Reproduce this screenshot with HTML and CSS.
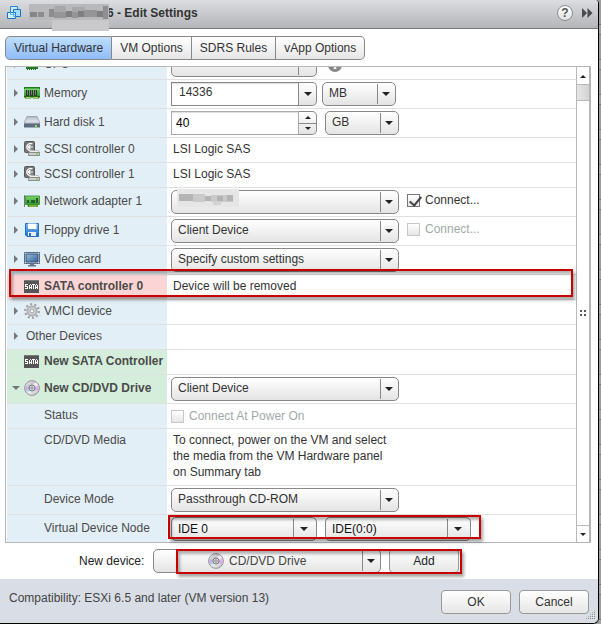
FILE: index.html
```
<!DOCTYPE html>
<html lang="en">
<head>
<meta charset="utf-8">
<title>Edit Settings</title>
<link rel="stylesheet" href="styles.css">
</head>
<body>
<svg width="0" height="0" class="defs" aria-hidden="true">
  <defs>
    <linearGradient id="g-green" x1="0" y1="0" x2="0" y2="1"><stop offset="0" stop-color="#7fd66e"/><stop offset="1" stop-color="#1f8a1c"/></linearGradient>
    <linearGradient id="g-blue" x1="0" y1="0" x2="0" y2="1"><stop offset="0" stop-color="#7db9f5"/><stop offset="1" stop-color="#1c6fd0"/></linearGradient>
    <linearGradient id="g-disc" x1="0" y1="0" x2="1" y2="1"><stop offset="0" stop-color="#fafafa"/><stop offset=".35" stop-color="#c4c4ca"/><stop offset=".5" stop-color="#f2f2f6"/><stop offset="1" stop-color="#b4b4ba"/></linearGradient>
    <linearGradient id="g-disk" x1="0" y1="0" x2="0" y2="1"><stop offset="0" stop-color="#b4bcc8"/><stop offset="1" stop-color="#e8ecf1"/></linearGradient>
    <linearGradient id="g-screen" x1="0" y1="0" x2="1" y2="1"><stop offset="0" stop-color="#9dbfe0"/><stop offset="1" stop-color="#33618f"/></linearGradient>
    <symbol id="i-memory" viewBox="0 0 16 16">
      <path d="M0 2h16v10h-1v1.500h-6v-1h-2v1H1V12H0z" fill="url(#g-green)"/>
      <path d="M0 2h16v2H0z" fill="#1f7a1f"/><path d="M1 3.500h14v1H1z" fill="#8be07c"/>
      <path d="M2 5h3v6H2zM6 5h3v6H6zM10 5h3v6h-3z" fill="#2b352b"/>
      <path d="M3 5h1v5H3zM7 5h1v5H7zM11 5h1v5h-1z" fill="#77807a"/>
      <path d="M0 11h16v1.500H0z" fill="#176b17"/><path d="M2 12.500h5M9 12.500h5" stroke="#c9c94e"/>
    </symbol>
    <symbol id="i-cpu" viewBox="0 0 16 16">
      <path d="M2 2h12v11H2z" fill="#1c7a1c"/><path d="M4 3h8v8H4z" fill="#333"/><path d="M3 13.500h10" stroke="#175c17" stroke-dasharray="1 1"/>
    </symbol>
    <symbol id="i-disk" viewBox="0 0 16 16">
      <path d="M3 2.500h10l3 6.500H0z" fill="url(#g-disk)" stroke="#8a93a0" stroke-width=".7"/>
      <path d="M0 9h16v4.500H0z" fill="#5d6b80"/><path d="M0 9.500h16" stroke="#8c98aa"/><path d="M11 11h2v2h-2z" fill="#85e34a"/>
    </symbol>
    <symbol id="i-scsi" viewBox="0 0 16 16">
      <rect x=".5" y=".5" width="10" height="11" rx="1" fill="#767676" stroke="#5a5a5a"/>
      <path d="M8.500 3A3.600 3.600 0 1 0 8.500 9" fill="none" stroke="#fff" stroke-width="1.200"/>
      <path d="M9 6H4M6.500 3.800L4.200 6l2.300 2.200" fill="none" stroke="#fff" stroke-width="1.200"/>
      <path d="M6 9.500h8.500l1.200 2.500H4.800z" fill="#eee" stroke="#999" stroke-width=".5"/><path d="M4.500 11.500h11v3h-11z" fill="#cfcfcd" stroke="#777" stroke-width=".8"/><path d="M12 12.500h2v1h-2z" fill="#4ed60c"/>
    </symbol>
    <symbol id="i-net" viewBox="0 0 16 16">
      <path d="M.5 2v12" stroke="#777"/><path d="M1.500 3h14v8.500h-2v2H4v-2H1.500z" fill="url(#g-green)" stroke="#2c8a26" stroke-width=".8"/>
      <path d="M3 7h2v3H3zM7 7h4v3H7zM12 5h2v5h-2z" fill="#275c2c"/><path d="M5 13h8" stroke="#d4c94b"/>
    </symbol>
    <symbol id="i-floppy" viewBox="0 0 16 16">
      <path d="M1.500 1.500h13v13H3l-1.500-1.500z" fill="url(#g-blue)" stroke="#246fc4"/>
      <path d="M4 1.500h8.500V7H4z" fill="#fff"/><path d="M4 10h8v4H4z" fill="#e8eef5"/><path d="M5 11h2v3H5z" fill="#246fc4"/>
    </symbol>
    <symbol id="i-video" viewBox="0 0 16 16">
      <path d="M.5 1.500h15v11H.5z" fill="#dfe6ee" stroke="#5c6f86"/><path d="M2 3h12v8H2z" fill="url(#g-screen)" stroke="#2f5279"/>
      <path d="M6 13h4v1h2v1.500H4V14h2z" fill="#66788c"/>
    </symbol>
    <symbol id="i-sata" viewBox="0 0 16 16">
      <g shape-rendering="crispEdges"><path d="M0 2h15v13H0z" fill="#555"/><path d="M0 2h15v1H0z" fill="#7a7a7a"/>
      <path d="M1 6h3v1H1zM1 7h1v1H1zM1 8h3v1H1zM3 9h1v1H3zM1 10h3v1H1zM6 6h1v1H6zM5 7h1v4H5zM7 7h1v4H7zM6 9h1v1H6zM8 6h3v1H8zM9 7h1v4H9zM12 6h1v1h-1zM11 7h1v4h-1zM13 7h1v4h-1zM12 9h1v1h-1z" fill="#fff"/></g>
    </symbol>
    <symbol id="i-gear" viewBox="0 0 16 16">
      <circle cx="8" cy="8" r="6.700" fill="none" stroke="#a3a6a8" stroke-width="2.500" stroke-dasharray="2.100 2.100"/>
      <circle cx="8" cy="8" r="4.500" fill="#dadcdd" stroke="#b0b2b4" stroke-width="2"/><circle cx="8" cy="8" r="2" fill="#f4f7f9" stroke="#999"/>
    </symbol>
    <symbol id="i-disc" viewBox="0 0 16 16">
      <circle cx="8" cy="8" r="7.400" fill="url(#g-disc)" stroke="#98989c"/>
      <path d="M1.500 6L5 7v3l-3.500 1z" fill="#c9a5ef" opacity=".8"/><path d="M14.500 5L11 7v3l3.500 1z" fill="#d79af0" opacity=".7"/><path d="M2 10l3-1 1 2-2 2z" fill="#9fe0ea" opacity=".7"/>
      <circle cx="8" cy="8" r="3" fill="#e3e3e6" stroke="#77777c"/><circle cx="8" cy="8" r="1.200" fill="#fff" stroke="#66666b" stroke-width=".8"/>
    </symbol>
  </defs>
</svg>
<main class="dialog">
  <header class="titlebar">
    <svg class="vm" viewBox="0 0 14 14" aria-hidden="true"><path d="M3.500.500h7v8h-7z" fill="#c8ecff" stroke="#2a86d8"/><path d="M6.500 3.500h7v7h-7z" fill="#a6dcfb" stroke="#1673c9"/><path d="M.5 6.500h8v6h-8z" fill="#d5f3ff" stroke="#1673c9"/><path d="M3.500 6.500v2h5M6.500 6.500v4h2" fill="none" stroke="#5db2ea"/></svg>
    <svg class="mask" viewBox="0 0 80 27" aria-hidden="true">
      <path d="M0 0h80v16H0z" fill="#b9b9bb"/><path d="M23 16h57v11H23z" fill="#c9c9cb"/>
      <path d="M1 8h7v5H1z" fill="#858587"/><path d="M9 8h6v5H9zM20 5h5v8h-5z" fill="#8c8c8d"/><path d="M25 2h12v6H25zM43 3h13v5H43z" fill="#a8a8aa"/>
      <path d="M25 8h12v6H25z" fill="#959597"/><path d="M37 7h6v6h-6zM49 7h6v6h-6zM68 7h6v6h-6z" fill="#7f7f81"/><path d="M43 8h6v6h-6zM55 6h13v7H55z" fill="#959597"/><path d="M74 2h5v13h-5z" fill="#8f8f91"/>
    </svg>
    <h1>6 - Edit Settings</h1>
    <button class="help" type="button" aria-label="Help">?</button>
    <button class="more" type="button" aria-label="Expand"><svg viewBox="0 0 12 10"><path d="M1 0l5 5-5 5zM6.500 0l5 5-5 5z" fill="#4a4a4c"/></svg></button>
  </header>

  <nav class="tabs">
    <button class="tab active" type="button">Virtual Hardware</button>
    <button class="tab" type="button">VM Options</button>
    <button class="tab" type="button">SDRS Rules</button>
    <button class="tab" type="button">vApp Options</button>
  </nav>

  <section class="panel">
    <div class="rows">
      <div class="row clipped">
        <div class="name"><i class="tri"></i><svg class="icon"><use href="#i-cpu"/></svg><label for="cpu">CPU</label></div>
        <div class="value"><span class="pick w-mem"><select id="cpu" aria-label="CPU count"><option></option></select></span><span class="info">i</span></div>
      </div>
      <div class="row">
        <div class="name"><i class="tri"></i><svg class="icon"><use href="#i-memory"/></svg><label for="mem">Memory</label></div>
        <div class="value"><span class="combo"><input id="mem" type="text" value="14336"><button type="button" class="drop" aria-label="Memory sizes"><i class="down"></i></button></span>
          <span class="pick w-unit"><select aria-label="Memory unit"><option>MB</option></select></span></div>
      </div>
      <div class="row">
        <div class="name"><i class="tri"></i><svg class="icon"><use href="#i-disk"/></svg><label for="hd">Hard disk 1</label></div>
        <div class="value wide"><span class="combo spin"><input id="hd" type="text" value="40"><span class="steps"><button type="button" aria-label="Increase"><i class="up"></i></button><button type="button" aria-label="Decrease"><i class="down"></i></button></span></span>
          <span class="pick w-unit"><select aria-label="Disk unit"><option>GB</option></select></span></div>
      </div>
      <div class="row short">
        <div class="name"><i class="tri"></i><svg class="icon"><use href="#i-scsi"/></svg><span>SCSI controller 0</span></div>
        <div class="value"><p>LSI Logic SAS</p></div>
      </div>
      <div class="row short">
        <div class="name"><i class="tri"></i><svg class="icon"><use href="#i-scsi"/></svg><span>SCSI controller 1</span></div>
        <div class="value"><p>LSI Logic SAS</p></div>
      </div>
      <div class="row">
        <div class="name"><i class="tri"></i><svg class="icon"><use href="#i-net"/></svg><label for="net">Network adapter 1</label></div>
        <div class="value"><span class="pick w-full"><select id="net"><option></option></select>
          <svg class="netmask" viewBox="0 0 62 18" aria-hidden="true"><path d="M0 0h62v18H0z" fill="#e6e6e6"/><path d="M2 5h14v7H2z" fill="#b4b4b4"/><path d="M16 5h12v8H16zM34 6h22v7H34z" fill="#cacaca"/><path d="M28 7h6v5h-6zM40 7h6v5h-6zM50 6h6v6h-6z" fill="#b4b4b4"/><path d="M36 12h8v4h-8z" fill="#d2d2d2"/></svg></span>
          <label class="check"><input type="checkbox" checked>Connect...</label></div>
      </div>
      <div class="row">
        <div class="name"><i class="tri"></i><svg class="icon"><use href="#i-floppy"/></svg><label for="floppy">Floppy drive 1</label></div>
        <div class="value"><span class="pick w-full"><select id="floppy"><option>Client Device</option></select></span>
          <label class="check off"><input type="checkbox" disabled>Connect...</label></div>
      </div>
      <div class="row">
        <div class="name"><i class="tri"></i><svg class="icon"><use href="#i-video"/></svg><label for="video">Video card</label></div>
        <div class="value"><span class="pick w-full"><select id="video"><option>Specify custom settings</option></select></span></div>
      </div>
      <div class="row short removed">
        <div class="name"><i class="tri none"></i><svg class="icon"><use href="#i-sata"/></svg><span>SATA controller 0</span></div>
        <div class="value"><p>Device will be removed</p></div>
        <div class="mark mark-row"></div>
      </div>
      <div class="row short">
        <div class="name"><i class="tri"></i><svg class="icon"><use href="#i-gear"/></svg><span>VMCI device</span></div>
        <div class="value"></div>
      </div>
      <div class="row short">
        <div class="name"><i class="tri"></i><span class="group">Other Devices</span></div>
        <div class="value"></div>
      </div>
      <div class="row short added">
        <div class="name"><i class="tri none"></i><svg class="icon"><use href="#i-sata"/></svg><span>New SATA Controller</span></div>
        <div class="value"></div>
      </div>
      <div class="row added">
        <div class="name"><i class="tri open"></i><svg class="icon"><use href="#i-disc"/></svg><label for="cd">New CD/DVD Drive</label></div>
        <div class="value"><span class="pick w-full"><select id="cd"><option>Client Device</option></select></span></div>
      </div>
      <div class="row short sub">
        <div class="name"><span>Status</span></div>
        <div class="value"><label class="check off first"><input type="checkbox" disabled>Connect At Power On</label></div>
      </div>
      <div class="row tall sub">
        <div class="name"><span>CD/DVD Media</span></div>
        <div class="value"><p class="note">To connect, power on the VM and select the media from the VM Hardware panel on Summary tab</p></div>
      </div>
      <div class="row sub">
        <div class="name"><label for="mode">Device Mode</label></div>
        <div class="value"><span class="pick w-full"><select id="mode"><option>Passthrough CD-ROM</option></select></span></div>
      </div>
      <div class="row last sub">
        <div class="name"><label for="node">Virtual Device Node</label></div>
        <div class="value"><span class="pick w-mem"><select id="node"><option>IDE 0</option></select></span>
          <span class="pick w-mem"><select aria-label="Device slot"><option>IDE(0:0)</option></select></span>
          <div class="mark mark-node"></div></div>
      </div>
    </div>
    <div class="scroll" aria-hidden="true">
      <span class="end"><i class="up"></i></span>
      <span class="thumb"></span>
      <span class="track"><i class="grip"></i></span>
      <span class="end bottom"><i class="down"></i></span>
    </div>
  </section>

  <div class="newdev">
    <label for="newdev">New device:</label>
    <span class="pick w-full device"><svg class="icon"><use href="#i-disc"/></svg><select id="newdev"><option>CD/DVD Drive</option></select></span>
    <button class="btn" type="button">Add</button>
    <div class="mark mark-new"></div>
  </div>

  <footer class="footer">
    <p>Compatibility: ESXi 6.5 and later (VM version 13)</p>
    <button class="btn" type="button">OK</button>
    <button class="btn" type="button">Cancel</button>
    <i class="resize"></i>
  </footer>
</main>
</body>
</html>
```
FILE: styles.css
```
* { box-sizing: border-box; }

body {
  margin: 0;
  padding-right: 2px;
  background: repeating-linear-gradient(#9c9c9c 0 24px, #777 24px 25px, #a4a4a4 25px 34px, #777 34px 35px);
  font: 12px/16px "Liberation Sans", Arial, sans-serif;
  color: #333;
}

.defs { position: absolute; }

button, input, select {
  margin: 0;
  padding: 0;
  font: inherit;
  color: inherit;
}

p, h1 { margin: 0; }

.dialog {
  background: #fff;
  border: solid #000;
  border-width: 0 1px 1px 0;
  border-radius: 0 4px 6px 0;
  overflow: hidden;
}

/* Title bar */
.titlebar {
  display: flex;
  align-items: center;
  height: 29px;
  padding: 0 5px 3px 7px;
  background: linear-gradient(#dcdde1, #b4b5b9);
  border-bottom: 1px solid #77777a;
}

.vm { width: 14px; height: 14px; }

.mask {
  position: absolute;
  left: 29px;
  top: 4px;
  width: 80px;
  height: 27px;
}

.titlebar h1 {
  flex: 1;
  padding-left: 86px;
  font-size: 12px;
}

.help {
  width: 16px;
  height: 16px;
  border: 1px solid #8b8b8e;
  border-radius: 50%;
  background: linear-gradient(#fff, #e2e2e4);
  font-weight: bold;
  line-height: 14px;
  color: #555;
}

.more {
  display: flex;
  width: 20px;
  padding-left: 8px;
  border: 0;
  background: none;
}

.more svg { width: 12px; height: 10px; }

/* Tabs */
.tabs {
  display: flex;
  padding: 7px 5px 6px;
}

.tab {
  height: 24px;
  padding: 0 8px;
  border: 1px solid #88888a;
  border-left-width: 0;
  background: linear-gradient(#fff, #e6e6e6);
}

.tab:first-child { border-left-width: 1px; border-radius: 5px 0 0 5px; }
.tab:last-child { border-radius: 0 5px 5px 0; }
.tab.active { background: linear-gradient(#bedefc, #8fbcfa); }

/* Device list */
.panel {
  display: flex;
  margin: 0 7px 0 5px;
  border: 1px solid #b4b6b7;
  border-right-width: 2px;
}

.rows { flex: 1; padding-left: 1px; }

.row {
  position: relative;
  display: grid;
  grid-template-columns: 160px 1fr;
  height: 29px;
  border-bottom: 1px solid #e0e0e0;
}

.row.short { height: 25px; }
.row.tall { height: 57px; }
.row.last { height: 27px; border-bottom: 0; }

.row.clipped {
  grid-template-rows: 28px;
  align-content: end;
  height: 13px;
  overflow: hidden;
}

.name {
  display: flex;
  align-items: center;
  padding: 0 0 2px 7px;
  background: #e3eff6;
  color: #4a4a4a;
  white-space: nowrap;
}

.name .icon + * { margin-left: 4px; }
.name .group { margin-left: 2px; }
.sub .name { padding-left: 37px; }
.removed .name { background: #fbd5d5; font-weight: bold; }
.added .name { background: #d5eedb; font-weight: bold; }

.tall .name,
.tall .value { align-items: flex-start; padding-top: 3px; }

.icon {
  flex: none;
  width: 16px;
  height: 16px;
}

.tri {
  width: 4px;
  margin-right: 6px;
  border: solid transparent;
  border-width: 4px 0 4px 4px;
  border-left-color: #777;
}

.tri.none { border-color: transparent; }

.tri.open {
  width: 8px;
  margin: 0 4px 0 -2px;
  border-width: 4px 4px 0;
  border-color: #777 transparent transparent;
}

.value {
  position: relative;
  display: flex;
  align-items: center;
  gap: 5px;
  padding-left: 4px;
}

.value p { padding: 0 0 2px 2px; }
.value .note { width: 220px; }
.value.wide { gap: 8px; }
.last .value { gap: 8px; }

/* Drop-downs */
.pick {
  position: relative;
  display: flex;
  align-items: center;
  height: 24px;
  border: 1px solid #888;
  border-radius: 5px;
  background: linear-gradient(#fff, #e4e4e4);
}

.pick select {
  flex: 1;
  width: 100%;
  height: 20px;
  padding: 0 18px 2px 6px;
  border: 0;
  background: none;
  appearance: none;
}

.pick::before {
  content: "";
  position: absolute;
  right: 17px;
  top: 1px;
  bottom: 1px;
  border-left: 1px solid #888;
}

.pick::after,
.down,
.up {
  content: "";
  border: solid transparent;
  border-width: 4px 4px 0;
  border-top-color: #222;
}

.pick::after {
  position: absolute;
  right: 5px;
  top: 9px;
}

.last .pick select { padding-bottom: 0; color: #111; }
.last .pick::before { right: 22px; }
.last .pick::after { right: 8px; }

.up, .down { display: block; }
.up { border-width: 0 3px 3px; border-bottom-color: #222; }
.down { border-width: 3px 3px 0; }
.drop .down { border-width: 4px 4px 0; }

.w-mem { width: 146px; }
.w-unit { width: 74px; }
.w-full { width: 228px; }

.netmask {
  position: absolute;
  left: 5px;
  top: -2px;
  width: 62px;
  height: 18px;
}

.info {
  width: 14px;
  height: 14px;
  margin-left: 6px;
  border-radius: 50%;
  background: #888;
  color: #fff;
  font: bold 12px/14px "Liberation Serif", serif;
  text-align: center;
}

/* Text boxes with a button */
.combo {
  display: flex;
  width: 146px;
  height: 24px;
}

.combo input {
  flex: 1;
  min-width: 0;
  padding: 0 0 5px 7px;
  border: 1px solid #888;
  background: #fff;
  box-shadow: inset 0 1px 1px #ddd;
}

.combo.spin input { padding: 0 0 0 4px; border-color: #aaa; color: #000; }

.drop,
.steps {
  display: flex;
  align-items: center;
  justify-content: center;
  width: 18px;
  border: 1px solid #888;
  border-left: 0;
  border-radius: 0 5px 5px 0;
  background: linear-gradient(#fff, #e4e4e4);
}

.steps {
  flex-direction: column;
  overflow: hidden;
}

.steps button {
  flex: 1;
  display: flex;
  align-items: center;
  justify-content: center;
  width: 100%;
  border: 0;
  background: none;
}

.steps button + button { border-top: 1px solid #888; }

/* Check boxes */
.check {
  display: flex;
  align-items: center;
  gap: 5px;
  height: 16px;
  margin: 0 0 4px 3px;
}

.check.first { margin: 0; }
.check.off { color: #a0aaaa; }

.check input {
  position: relative;
  width: 13px;
  height: 13px;
  border: 1px solid #777;
  background: linear-gradient(#fff, #e6e6e6);
  appearance: none;
}

.check.off input { border-color: #c4c8c8; }

.check input:checked::after {
  content: "";
  position: absolute;
  left: 4px;
  top: -1px;
  width: 5px;
  height: 10px;
  border: solid #444;
  border-width: 0 2px 2px 0;
  transform: rotate(40deg);
}

/* Scroll bar */
.scroll {
  display: flex;
  flex-direction: column;
  width: 13px;
  padding-top: 1px;
  border: solid #b9b9b9;
  border-width: 0 0 0 1px;
}

.end {
  display: flex;
  align-items: center;
  justify-content: center;
  height: 17px;
  border-bottom: 1px solid #b9b9b9;
}

.end.bottom { border-top: 1px solid #b9b9b9; border-bottom: 0; }

.thumb {
  height: 16px;
  border-bottom: 1px solid #b9b9b9;
  background: linear-gradient(90deg, #e6e6e6, #d2d2d2);
}

.track {
  flex: 1;
  display: flex;
  justify-content: center;
  padding-top: 209px;
}

.grip {
  width: 6px;
  height: 6px;
  background:
    linear-gradient(#555 0 0) 0 0 / 2px 2px no-repeat,
    linear-gradient(#555 0 0) 100% 0 / 2px 2px no-repeat,
    linear-gradient(#555 0 0) 0 100% / 2px 2px no-repeat,
    linear-gradient(#555 0 0) 100% 100% / 2px 2px no-repeat;
}

/* New device bar */
.newdev {
  position: relative;
  display: flex;
  align-items: center;
  height: 36px;
  padding-left: 79px;
  color: #222;
}

.newdev > label { width: 74px; }
.newdev .device { margin-right: 8px; padding-left: 54px; color: #444; }
.device select { padding: 0 18px 0 5px; }

.btn {
  width: 70px;
  height: 24px;
  border: 1px solid #999;
  border-radius: 4px;
  background: linear-gradient(#fff, #e6e6e6);
}

/* Highlight frames */
.mark {
  position: absolute;
  border: 2px solid #c80000;
  box-shadow: 2px 3px 3px rgba(0, 0, 0, .35), inset 2px 3px 3px rgba(0, 0, 0, .3);
  pointer-events: none;
}

.mark-row { left: 2px; right: 3px; top: -6px; bottom: 2px; z-index: 1; }
.mark-node { left: 1px; top: 0; width: 313px; height: 24px; }
.mark-new { left: 176px; top: 6px; width: 286px; height: 25px; }

/* Footer */
.footer {
  position: relative;
  display: flex;
  align-items: flex-start;
  gap: 8px;
  height: 44px;
  padding: 11px 9px 0;
  background: #d9dde5;
}

.footer p {
  flex: 1;
  color: #444;
}

.resize {
  position: absolute;
  right: 3px;
  bottom: 3px;
  width: 10px;
  height: 10px;
  background: repeating-conic-gradient(#888 0 25%, transparent 0 100%) 0 0 / 2px 2px;
  clip-path: polygon(100% 0, 100% 100%, 0 100%);
}
```
